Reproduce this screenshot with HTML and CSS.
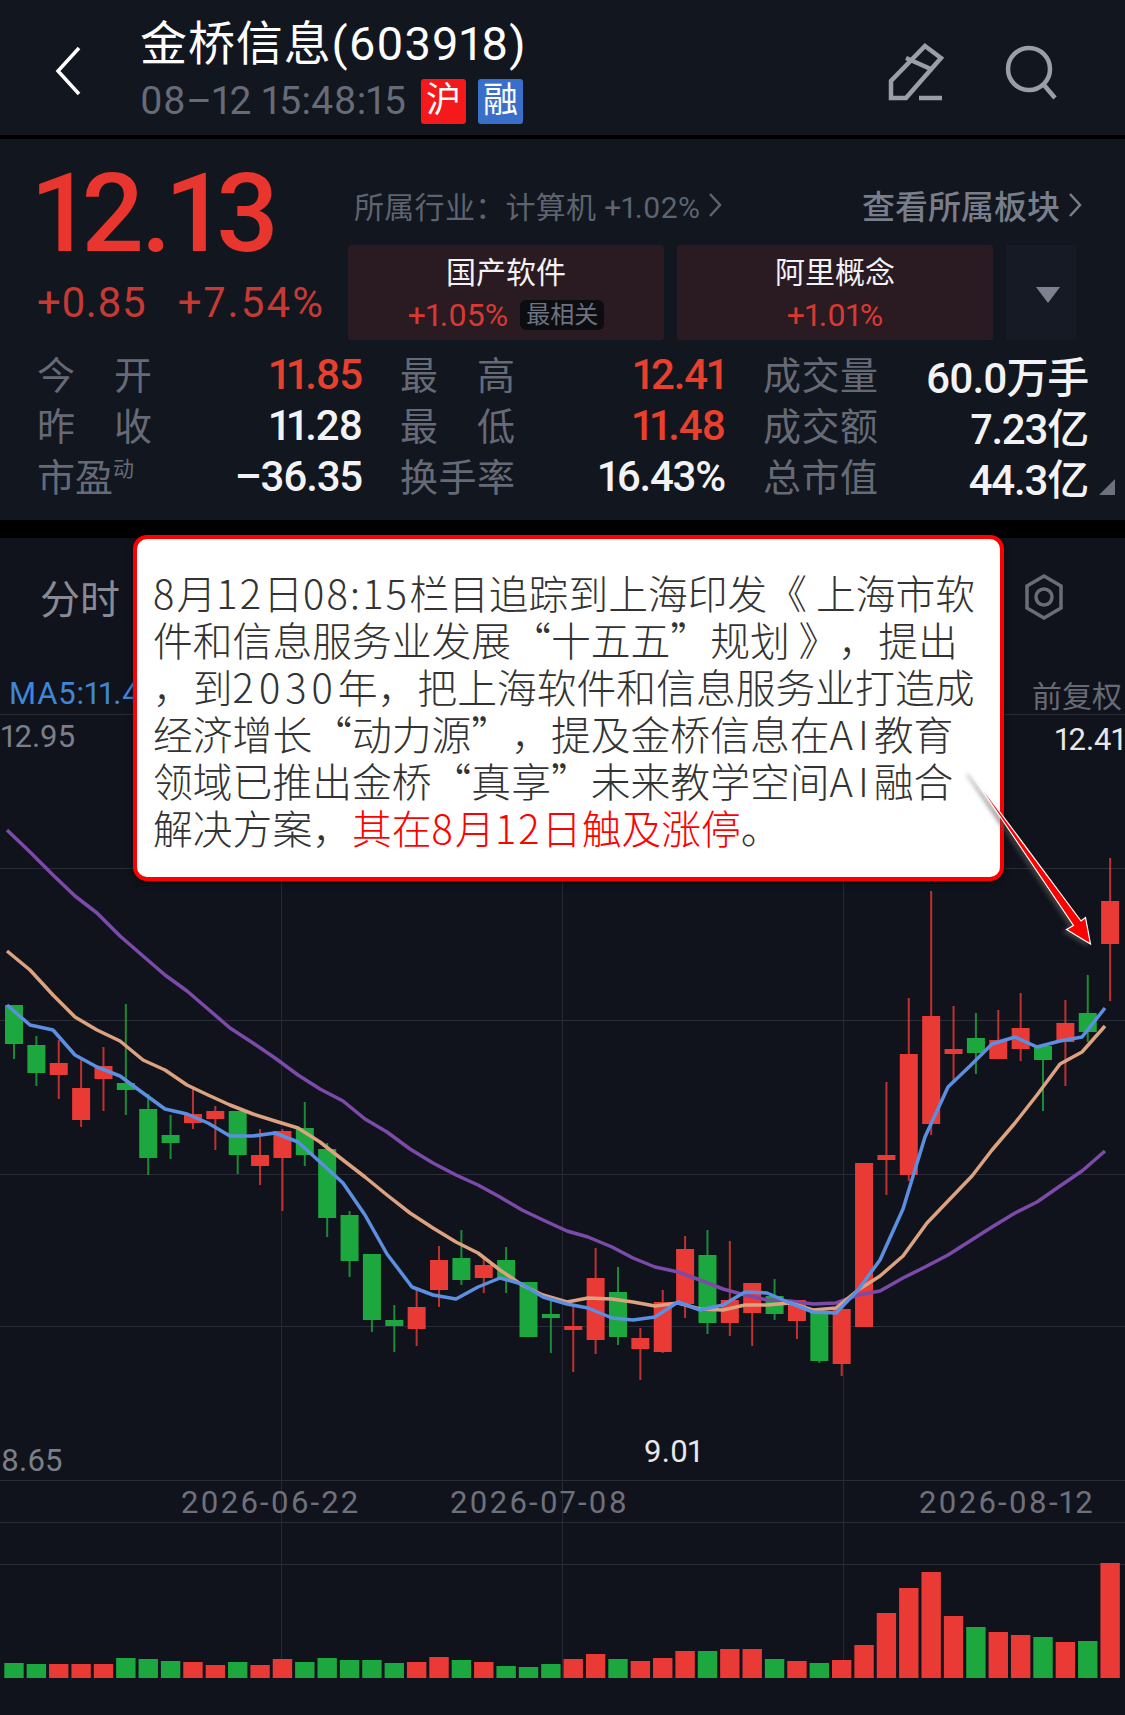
FILE: index.html
```html
<!DOCTYPE html>
<html lang="zh-CN">
<head>
    <meta charset="UTF-8">
    <title>金桥信息(603918)</title>
    <link rel="stylesheet" href="styles.css">
</head>
<body>
    <div class="page">
        <header class="topbar">
            <svg class="back-icon" width="26" height="50" viewBox="0 0 26 50"><path d="M24 2 L3 25 L24 48"/></svg>
            <div class="title-block">
                <div class="title">金桥信息(603918)</div>
                <div class="subtitle">
                    <span class="time">08–12 15:48:15</span>
                    <span class="tag tag-red">沪</span>
                    <span class="tag tag-blue">融</span>
                </div>
            </div>
            <div class="top-icons">
                <svg class="edit-icon" width="56" height="58" viewBox="0 0 56 58"><path d="M37 3 L53 15 L18 55 L3 55 L3 38 Z M18 15 L45 27 M31 55 L54 55"/></svg>
                <svg class="search-icon" width="52" height="58" viewBox="0 0 52 58"><circle cx="24" cy="26" r="21"/><path d="M39 42 L50 55"/></svg>
            </div>
        </header>

        <section class="quote">
            <div class="quote-head">
                <div class="price-col">
                    <div class="price">12.13</div>
                    <div class="change"><span>+0.85</span><span class="pct">+7.54%</span></div>
                </div>
                <div class="sector-col">
                    <div class="sector-row">
                        <span class="industry">所属行业：计算机 +1.02%
                            <svg class="chev" width="14" height="26" viewBox="0 0 14 26"><path d="M2 2 L12 13 L2 24"/></svg>
                        </span>
                        <span class="see-all">查看所属板块
                            <svg class="chev" width="14" height="26" viewBox="0 0 14 26"><path d="M2 2 L12 13 L2 24"/></svg>
                        </span>
                    </div>
                    <div class="cards">
                        <div class="card">
                            <div class="card-name">国产软件</div>
                            <div class="card-pct">+1.05%<span class="best">最相关</span></div>
                        </div>
                        <div class="card">
                            <div class="card-name">阿里概念</div>
                            <div class="card-pct">+1.01%</div>
                        </div>
                        <div class="card-more"><span class="down-tri"></span></div>
                    </div>
                </div>
            </div>

            <div class="stats">
                <div class="stat"><span class="label">今开</span><span class="value up">11.85</span></div>
                <div class="stat"><span class="label">最高</span><span class="value up">12.41</span></div>
                <div class="stat"><span class="label">成交量</span><span class="value">60.0万手</span></div>
                <div class="stat"><span class="label">昨收</span><span class="value">11.28</span></div>
                <div class="stat"><span class="label">最低</span><span class="value up">11.48</span></div>
                <div class="stat"><span class="label">成交额</span><span class="value">7.23亿</span></div>
                <div class="stat"><span class="label pe">市盈<sup>动</sup></span><span class="value">–36.35</span></div>
                <div class="stat"><span class="label">换手率</span><span class="value">16.43%</span></div>
                <div class="stat"><span class="label">总市值</span><span class="value">44.3亿</span></div>
            </div>
            <span class="corner-tri"></span>
        </section>

        <section class="chart">
            <div class="chart-tabs">
                <span class="tab">分时</span>
                <svg class="hex-icon" width="40" height="46" viewBox="0 0 40 46"><path d="M20 2 L37 12 L37 34 L20 44 L3 34 L3 12 Z"/><circle cx="20" cy="23" r="8"/></svg>
            </div>
            <div class="ma-row">
                <span class="ma5">MA5:11.47</span>
                <span class="adjust">前复权</span>
            </div>
            <svg id="kline" class="kline" width="1125" height="1177" viewBox="0 538 1125 1177"></svg>
            <span class="axis axis-high">12.95</span>
            <span class="axis axis-max">12.41</span>
            <span class="axis axis-low">8.65</span>
            <span class="axis axis-min">9.01</span>
            <span class="date date-1">2026-06-22</span>
            <span class="date date-2">2026-07-08</span>
            <span class="date date-3">2026-08-12</span>
        </section>

        <div class="callout">
            <span class="num">8</span>月<span class="num">12</span>日<span class="num">08:15</span>栏目追踪到上海印发《 上海市软<br>
            件和信息服务业发展“十五五”规划 》，提出<br>
            ，到<span class="num-wide">2030</span>年，把上海软件和信息服务业打造成<br>
            经济增长“动力源”，提及金桥信息在<span class="num-wide">AI</span>教育<br>
            领域已推出金桥“真享”未来教学空间<span class="num-wide">AI</span>融合<br>
            解决方案，<span class="hot">其在<span class="num">8</span>月<span class="num">12</span>日触及涨停</span>。
        </div>
        <svg class="arrow" width="140" height="190" viewBox="960 765 140 190">
            <path d="M970 772 L1081 921 L1085.5 917.5 L1090.5 944 L1066.5 929.5 L1073.5 925.5 Z"/>
        </svg>
    </div>
    <script src="chart.js"></script>
</body>
</html>
```

FILE: styles.css
```css
* {
    box-sizing: border-box;
}
html, body {
    margin: 0;
    padding: 0;
    background: #000;
}
body {
    font-family: Roboto, "Noto Sans CJK SC", sans-serif;
    font-variant-numeric: proportional-nums;
}
.page {
    position: relative;
    width: 1125px;
    height: 1715px;
    overflow: hidden;
    display: flex;
    flex-direction: column;
    background: #000;
}

/* top bar */
.topbar {
    height: 135px;
    flex: none;
    display: flex;
    align-items: flex-start;
    background: #12161f;
    margin-bottom: 4px;
}
.back-icon {
    margin: 46px 0 0 55px;
    fill: none;
    stroke: #fff;
    stroke-width: 3.5;
}
.title-block {
    margin: 15px 0 0 59px;
}
.title {
    font-size: 47px;
    line-height: 58px;
    font-weight: 400;
    color: #fff;
    letter-spacing: 0.9px;
}
.subtitle {
    display: flex;
    align-items: center;
    margin-top: 5px;
}
.time {
    font-size: 39px;
    color: #666b77;
    letter-spacing: 0.4px;
    width: 281px;
    white-space: nowrap;
}
.tag {
    width: 45px;
    height: 45px;
    border-radius: 3px;
    margin-right: 12px;
    text-align: center;
    font-size: 35px;
    line-height: 44px;
    color: #fff;
}
.tag-red {
    background: #f5191b;
}
.tag-blue {
    background: #3a6fc9;
}
.top-icons {
    margin-left: auto;
    margin-top: 43px;
    padding-right: 68px;
    display: flex;
    gap: 61px;
}
.edit-icon, .search-icon {
    fill: none;
    stroke: #9a9ea9;
    stroke-width: 4.5;
}

/* quote panel */
.quote {
    position: relative;
    height: 381px;
    flex: none;
    background: #12161f;
}
.quote-head {
    display: flex;
    padding-left: 37px;
    height: 201px;
}
.price-col {
    width: 311px;
}
.price {
    margin-top: 19px;
    margin-left: -3px;
    font-size: 110px;
    line-height: 112px;
    font-weight: 500;
    letter-spacing: -3px;
    color: #e8352e;
    white-space: nowrap;
}
.change {
    display: flex;
    gap: 32px;
    margin-top: 10px;
    font-size: 42px;
    line-height: 46px;
    color: #c53a33;
    letter-spacing: 0.3px;
    white-space: nowrap;
}
.pct {
    letter-spacing: 2.1px;
}
.sector-col {
    width: 734px;
}
.sector-row {
    display: flex;
    justify-content: space-between;
    align-items: center;
    height: 44px;
    margin-top: 44px;
    padding-left: 6px;
    white-space: nowrap;
}
.industry {
    font-size: 30px;
    color: #5e636f;
    display: flex;
    align-items: center;
    gap: 8px;
    letter-spacing: 0.3px;
}
.see-all {
    font-size: 33px;
    font-weight: 500;
    color: #797e8a;
    display: flex;
    align-items: center;
    gap: 8px;
}
.chev {
    fill: none;
    stroke: currentColor;
    stroke-width: 2.5;
}
.cards {
    display: flex;
    gap: 13px;
    margin-top: 18px;
}
.card {
    width: 316px;
    height: 95px;
    background: #2a1a22;
    border-radius: 3px;
    text-align: center;
}
.card-name {
    font-size: 30px;
    line-height: 36px;
    margin-top: 10px;
    color: #f2f2f4;
}
.card-pct {
    font-size: 32px;
    line-height: 36px;
    margin-top: 6px;
    color: #d83a33;
    display: flex;
    justify-content: center;
    align-items: center;
}
.best {
    margin-left: 12px;
    width: 84px;
    height: 30px;
    line-height: 30px;
    font-size: 24px;
    background: #0c0d10;
    border-radius: 6px;
    color: #6f7280;
}
.card-more {
    width: 70px;
    height: 95px;
    background: #161a24;
    display: flex;
    align-items: center;
    justify-content: center;
    padding: 5px 0 0 14px;
}
.down-tri {
    width: 24px;
    height: 16px;
    background: #7e8290;
    clip-path: polygon(0 0, 100% 0, 50% 100%);
}
.stats {
    display: grid;
    grid-template-columns: repeat(3, 325px);
    grid-auto-rows: 51px;
    column-gap: 38px;
    padding-left: 37px;
    margin-top: 9px;
}
.stat {
    display: flex;
    justify-content: space-between;
    align-items: center;
    white-space: nowrap;
}
.label {
    width: 115px;
    margin-top: -4px;
    font-size: 38px;
    color: #666a77;
    text-align: justify;
    text-align-last: justify;
}
.label.pe {
    text-align-last: left;
    white-space: nowrap;
}
.label sup {
    font-size: 21px;
    line-height: 0;
    vertical-align: 15px;
}
.value {
    font-size: 42px;
    font-weight: 500;
    color: #f3f3f5;
    letter-spacing: -1.2px;
}
.value.up {
    color: #e8402c;
}
.corner-tri {
    position: absolute;
    right: 10px;
    bottom: 25px;
    width: 16px;
    height: 16px;
    background: #6d717c;
    clip-path: polygon(100% 0, 100% 100%, 0 100%);
}

/* chart */
.chart {
    position: relative;
    flex: 1;
    margin-top: 18px;
    background: #11131c;
}
.chart-tabs {
    display: flex;
    justify-content: space-between;
    align-items: center;
    height: 118px;
    padding: 0 61px 0 40px;
}
.tab {
    font-size: 40px;
    color: #888b95;
}
.hex-icon {
    fill: none;
    stroke: #696d78;
    stroke-width: 3.5;
}
.ma-row {
    display: flex;
    justify-content: space-between;
    align-items: center;
    height: 59px;
    padding: 17px 3px 0 9px;
    border-bottom: 1px solid #2a2d38;
}
.ma5 {
    font-size: 31px;
    letter-spacing: 0.8px;
    color: #3f86d8;
    white-space: nowrap;
}
.adjust {
    font-size: 30px;
    color: #666a75;
}
.kline {
    position: absolute;
    left: 0;
    top: 0;
}
.axis {
    position: absolute;
    font-size: 31px;
    line-height: 36px;
    color: #7b7f89;
}
.axis-high {
    left: 1px;
    top: 181px;
}
.axis-max {
    right: 0;
    top: 184px;
    color: #e8e8ea;
}
.axis-low {
    left: 1px;
    top: 905px;
}
.axis-min {
    left: 644px;
    top: 896px;
    color: #e8e8ea;
}
.date {
    position: absolute;
    top: 947px;
    font-size: 31px;
    line-height: 36px;
    letter-spacing: 2.1px;
    color: #6e717b;
}
.date-1 {
    left: 181px;
}
.date-2 {
    left: 450px;
}
.date-3 {
    left: 919px;
}

/* annotation on top of the screenshot */
.callout {
    position: absolute;
    left: 133px;
    top: 535px;
    width: 871px;
    height: 346px;
    padding: 29px 0 0 16px;
    background: #fff;
    border: 4px solid #f00;
    border-radius: 14px;
    box-shadow: 0 2px 6px rgba(0, 0, 0, 0.5);
    font-family: "Noto Sans CJK SC", sans-serif;
    font-size: 39.8px;
    font-weight: 300;
    line-height: 47px;
    color: #333;
    white-space: nowrap;
    text-spacing-trim: space-all;
}
.num {
    letter-spacing: 2.2px;
}
.num-wide {
    letter-spacing: 5px;
}
.hot {
    color: #f00;
}
.arrow {
    position: absolute;
    left: 960px;
    top: 765px;
    filter: drop-shadow(-3px 2px 2px rgba(80, 80, 80, 0.7));
}
.arrow path {
    fill: #f00;
    stroke: #fff;
    stroke-width: 1.2;
}
```

FILE: chart.js
```js
// [color, wick top, body top, body bottom, wick bottom, volume top]
var candles = [
    ['g', 1005, 1005, 1044, 1059, 1663],
    ['g', 1036, 1045, 1073, 1086, 1664],
    ['r', 1040, 1063, 1075, 1099, 1664],
    ['r', 1060, 1088, 1120, 1127, 1664],
    ['r', 1047, 1066, 1079, 1111, 1664],
    ['g', 1004, 1083, 1090, 1115, 1658],
    ['g', 1094, 1109, 1158, 1175, 1659],
    ['g', 1115, 1135, 1143, 1159, 1661],
    ['r', 1089, 1114, 1123, 1129, 1662],
    ['r', 1106, 1111, 1119, 1150, 1665],
    ['g', 1111, 1111, 1155, 1174, 1662],
    ['r', 1129, 1155, 1166, 1185, 1665],
    ['r', 1129, 1131, 1158, 1211, 1659],
    ['g', 1102, 1128, 1155, 1166, 1662],
    ['g', 1143, 1149, 1218, 1237, 1658],
    ['g', 1211, 1215, 1261, 1277, 1660],
    ['g', 1254, 1254, 1320, 1332, 1660],
    ['g', 1305, 1320, 1326, 1352, 1663],
    ['r', 1287, 1307, 1329, 1346, 1662],
    ['r', 1246, 1260, 1290, 1307, 1657],
    ['g', 1230, 1258, 1280, 1285, 1660],
    ['r', 1257, 1265, 1278, 1293, 1662],
    ['g', 1247, 1260, 1280, 1293, 1666],
    ['g', 1282, 1282, 1337, 1337, 1667],
    ['g', 1300, 1314, 1318, 1353, 1664],
    ['r', 1305, 1326, 1330, 1372, 1659],
    ['r', 1248, 1278, 1340, 1354, 1654],
    ['g', 1267, 1292, 1337, 1345, 1659],
    ['r', 1328, 1338, 1349, 1380, 1661],
    ['r', 1290, 1302, 1352, 1353, 1658],
    ['r', 1236, 1249, 1304, 1318, 1651],
    ['g', 1230, 1255, 1323, 1334, 1651],
    ['r', 1241, 1300, 1323, 1336, 1649],
    ['r', 1283, 1283, 1313, 1346, 1649],
    ['g', 1279, 1296, 1314, 1320, 1659],
    ['r', 1300, 1300, 1321, 1339, 1661],
    ['g', 1311, 1311, 1361, 1363, 1663],
    ['r', 1309, 1309, 1364, 1376, 1660],
    ['r', 1163, 1163, 1327, 1327, 1645],
    ['r', 1082, 1155, 1160, 1195, 1613],
    ['r', 998, 1054, 1175, 1181, 1588],
    ['r', 891, 1016, 1124, 1135, 1572],
    ['r', 1006, 1049, 1054, 1082, 1616],
    ['g', 1013, 1038, 1053, 1074, 1627],
    ['r', 1010, 1040, 1059, 1059, 1632],
    ['r', 993, 1028, 1049, 1061, 1635],
    ['g', 1046, 1046, 1060, 1111, 1637],
    ['r', 1000, 1023, 1042, 1086, 1642],
    ['g', 975, 1013, 1032, 1042, 1641],
    ['r', 858, 901, 944, 1001, 1563]
];

var ma5 = '7,1005 30,1025 53,1030 75,1055 97,1067 120,1076 143,1093 165,1109 187,1114 208,1123 230,1136 253,1136 275,1133 298,1142 320,1162 343,1183 365,1215 387,1254 412,1287 433,1295 456,1299 478,1287 500,1278 522,1284 543,1297 567,1304 588,1308 612,1318 633,1320 655,1317 678,1302 700,1310 723,1305 745,1292 767,1293 790,1303 813,1312 836,1313 858,1290 880,1260 903,1209 925,1137 948,1087 970,1066 992,1044 1015,1037 1037,1047 1060,1041 1082,1037 1105,1008';
var ma10 = '7,951 30,970 53,995 75,1017 97,1030 120,1041 143,1060 165,1070 187,1085 208,1095 230,1105 253,1114 275,1121 298,1128 320,1142 343,1160 365,1177 387,1195 410,1213 433,1228 456,1242 478,1253 500,1270 522,1285 543,1295 567,1302 588,1298 612,1299 633,1302 655,1306 678,1303 700,1309 723,1310 745,1305 767,1305 790,1303 813,1310 836,1308 858,1290 880,1276 903,1256 927,1223 948,1201 972,1176 992,1150 1015,1123 1037,1095 1060,1064 1082,1052 1105,1026';
var ma20 = '7,830 30,852 53,875 75,896 97,913 120,936 143,956 165,975 187,991 208,1009 230,1028 253,1043 275,1058 298,1075 320,1089 343,1101 365,1119 387,1132 410,1149 433,1163 456,1175 478,1185 500,1197 522,1210 543,1220 567,1231 588,1237 612,1247 633,1258 655,1267 678,1272 700,1280 723,1289 745,1295 767,1300 790,1301 813,1304 836,1303 858,1295 880,1291 903,1278 925,1267 948,1255 970,1241 992,1227 1015,1213 1037,1202 1060,1186 1082,1171 1105,1151';

var COLORS = { r: '#e93a36', g: '#1ca83e' };
var VOLUME_BASE = 1678;
var svg = document.getElementById('kline');
var html = '';

// grid
[868.5, 1020.5, 1174.5, 1326.5, 1480.5, 1522.5, 1564.5].forEach(function (y) {
    html += '<line x1="0" x2="1125" y1="' + y + '" y2="' + y + '" stroke="#2a2d38" stroke-width="1"/>';
});
[281.5, 562.5, 843.5].forEach(function (x) {
    html += '<line x1="' + x + '" x2="' + x + '" y1="715" y2="' + VOLUME_BASE + '" stroke="#262934" stroke-width="1"/>';
});

candles.forEach(function (c, i) {
    var x = 14 + i * 22.37;
    var color = COLORS[c[0]];
    html += '<line x1="' + x + '" x2="' + x + '" y1="' + c[1] + '" y2="' + c[4] + '" stroke="' + color + '" stroke-width="2" opacity="0.8"/>';
    html += '<rect x="' + (x - 9) + '" y="' + c[2] + '" width="18" height="' + (c[3] - c[2]) + '" fill="' + color + '"/>';
    html += '<rect x="' + (x - 9.7) + '" y="' + c[5] + '" width="19.4" height="' + (VOLUME_BASE - c[5]) + '" fill="' + color + '"/>';
});

[[ma20, '#7c4aa8'], [ma10, '#dda27f'], [ma5, '#5b8fe2']].forEach(function (line) {
    html += '<polyline points="' + line[0] + '" fill="none" stroke="' + line[1] + '" stroke-width="3.5" stroke-linejoin="round"/>';
});

svg.innerHTML = html;
```
